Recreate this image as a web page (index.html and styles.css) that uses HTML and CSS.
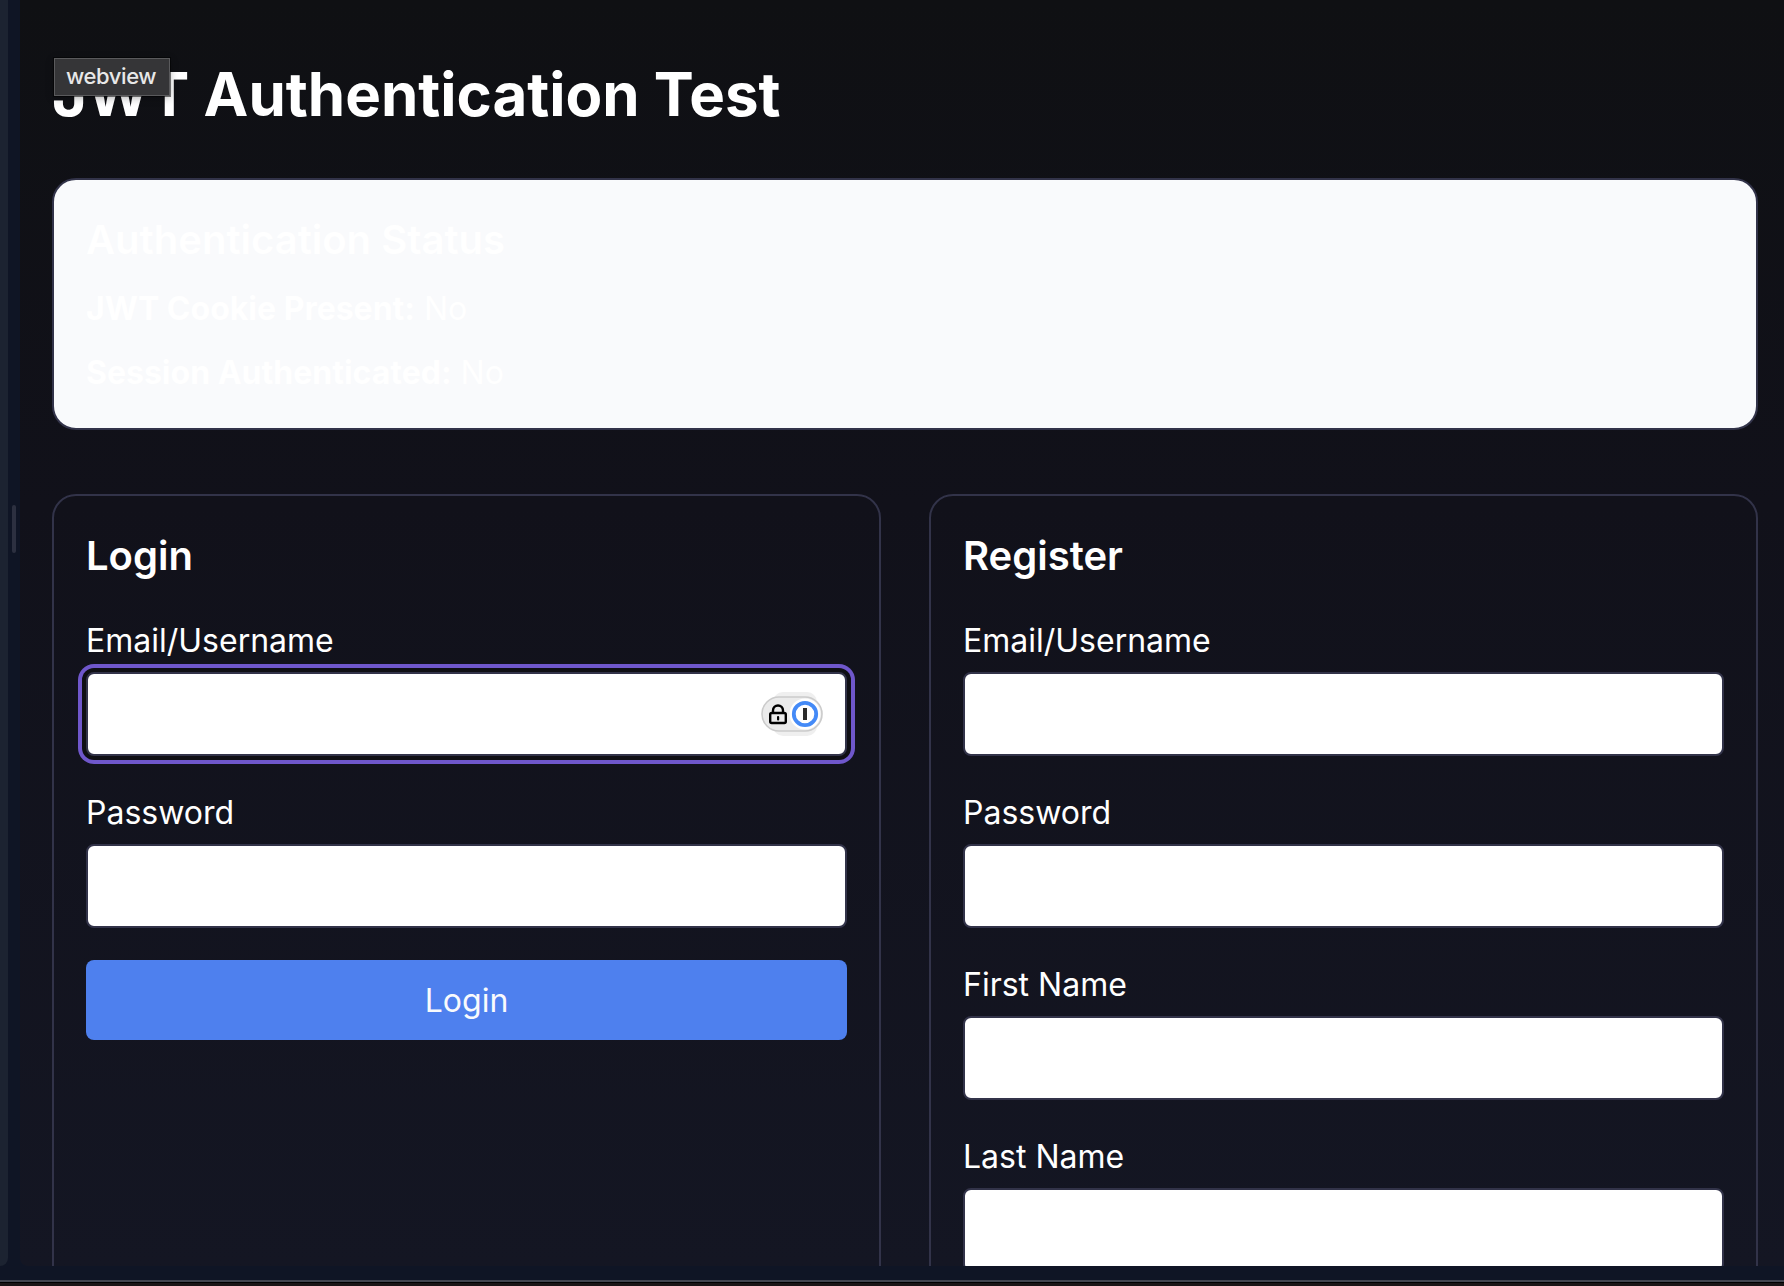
FILE: index.html
```html
<!DOCTYPE html>
<html lang="en">
<head>
<meta charset="utf-8">
<title>JWT Authentication Test</title>
<link rel="stylesheet" href="styles.css">
</head>
<body>
<div class="workspace">
  <aside class="side-panel"></aside>
  <div class="splitter"><span class="grip"></span></div>
  <main class="webview">
    <h1>JWT Authentication Test</h1>
    <section class="card status">
      <h2>Authentication Status</h2>
      <p><strong>JWT Cookie Present:</strong> No</p>
      <p><strong>Session Authenticated:</strong> No</p>
    </section>
    <div class="forms">
      <section class="card">
        <h2>Login</h2>
        <div class="field">
          <label for="login-user">Email/Username</label>
          <div class="control">
            <input id="login-user" class="focused" type="text">
            <svg class="autofill" width="64" height="46" viewBox="0 0 64 46">
              <rect x="13" y="1" width="44" height="44" rx="10" fill="#efefef"/>
              <rect x="2" y="6" width="60" height="34" rx="17" fill="#ebebeb" stroke="#cbcbcb" stroke-width="1.6"/>
              <circle cx="45" cy="23" r="15.5" fill="#fff"/>
              <circle cx="45" cy="23" r="11.2" fill="#fff" stroke="#448af7" stroke-width="3.8"/>
              <rect x="43" y="17" width="4" height="12" fill="#2b2b2b"/>
              <path d="M13 22v-2.500a5 5 0 0 1 10 0V22" fill="none" stroke="#000" stroke-width="2.400"/>
              <rect x="10.200" y="22" width="15.600" height="10" rx="1.500" fill="none" stroke="#000" stroke-width="2.400"/>
              <rect x="17" y="25" width="2.200" height="4.500" rx="1" fill="#000"/>
            </svg>
          </div>
        </div>
        <div class="field">
          <label for="login-pass">Password</label>
          <input id="login-pass" type="password">
        </div>
        <button type="button">Login</button>
      </section>
      <section class="card">
        <h2>Register</h2>
        <div class="field">
          <label for="reg-user">Email/Username</label>
          <input id="reg-user" type="text">
        </div>
        <div class="field">
          <label for="reg-pass">Password</label>
          <input id="reg-pass" type="password">
        </div>
        <div class="field">
          <label for="reg-first">First Name</label>
          <input id="reg-first" type="text">
        </div>
        <div class="field">
          <label for="reg-last">Last Name</label>
          <input id="reg-last" type="text">
        </div>
      </section>
    </div>
    <div class="tooltip">webview</div>
  </main>
</div>
<footer class="window-edge"></footer>
</body>
</html>
```
FILE: styles.css
```css
* {
  box-sizing: border-box;
}

body {
  margin: 0;
  height: 1286px;
  overflow: hidden;
  display: flex;
  flex-direction: column;
  background: #0f1525;
  color: #fff;
  font: 32px/50px Inter, "Liberation Sans", sans-serif;
}

h1, h2, p {
  margin: 0;
}

.workspace {
  height: 1266px;
  display: flex;
}

.side-panel {
  flex: 0 0 8px;
  background: #1c2331;
  border-bottom-right-radius: 8px;
}

.splitter {
  flex: 0 0 12px;
  display: flex;
  align-items: center;
  padding: 0 4px;
  margin-bottom: 208px;
}

.grip {
  width: 4px;
  height: 48px;
  border-radius: 2px;
  background: #2c3040;
}

.webview {
  position: relative;
  flex: 0 0 1770px;
  padding: 58px 32px 0;
  overflow: hidden;
  border-bottom-left-radius: 8px;
  background: linear-gradient(#0f1013, #11111a 40%, #141623);
}

h1 {
  margin-bottom: 48px;
  font-size: 60px;
  line-height: 72px;
  font-weight: 700;
}

h2 {
  font-size: 40px;
  line-height: 56px;
  font-weight: 600;
  margin-bottom: 32px;
}

.card {
  border: 2px solid #323349;
  border-radius: 24px;
  padding: 32px;
}

.status {
  height: 252px;
  background: #f9fafc;
  margin-bottom: 64px;
}

.status h2 {
  margin-bottom: 16px;
}

.status p + p {
  margin-top: 14px;
}

strong {
  font-weight: 700;
}

.forms {
  display: grid;
  grid-template-columns: 1fr 1fr;
  gap: 48px;
  height: 900px;
}

.field {
  margin-bottom: 32px;
}

label {
  display: block;
  margin-bottom: 6px;
}

.control {
  position: relative;
}

input {
  display: block;
  width: 100%;
  height: 84px;
  border: 2px solid #323349;
  border-radius: 8px;
  background: #fff;
  outline: none;
}

.focused {
  box-shadow: 0 0 0 4px #0f0f14, 0 0 0 8px #6f57cb;
}

.autofill {
  position: absolute;
  right: 23px;
  top: 19px;
}

button {
  display: block;
  width: 100%;
  height: 80px;
  padding: 2px 0 0;
  border: 0;
  border-radius: 8px;
  background: #4e80ee;
  color: #f9fafc;
  font: inherit;
}

.tooltip {
  position: absolute;
  left: 34px;
  top: 58px;
  width: 116px;
  height: 38px;
  padding-left: 11px;
  border: 1px solid #5a5a5c;
  background: #353537;
  box-shadow: 0 2px 8px rgba(0, 0, 0, .3), 0 0 0 1px rgba(0, 0, 0, .5);
  color: #e8e8e8;
  font-size: 22px;
  font-weight: 500;
  letter-spacing: -.4px;
  line-height: 34px;
}

.window-edge {
  height: 6px;
  margin-top: 14px;
  border-top: 2px solid #42454f;
  background: linear-gradient(#000 1px, #1a1516 1px);
}
```
